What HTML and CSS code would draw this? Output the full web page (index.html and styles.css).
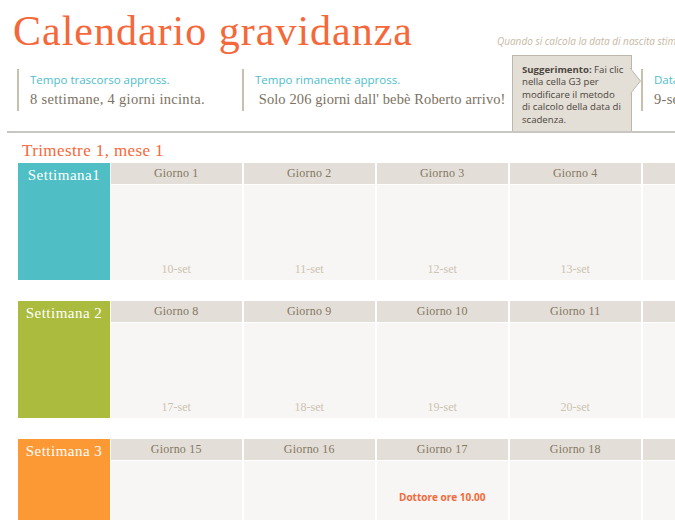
FILE: index.html
```html
<!DOCTYPE html>
<html lang="it">
<head>
<meta charset="utf-8">
<title>Calendario gravidanza</title>
<link rel="stylesheet" href="styles.css">
</head>
<body>
<div class="page">
  <header class="top">
    <div class="title-row">
      <h1 class="title">Calendario gravidanza</h1>
      <p class="note">Quando si calcola la data di nascita stimata, usare il primo giorno dell'ultimo ciclo</p>
    </div>
    <div class="stats">
      <div class="stat s1">
        <div class="lbl">Tempo trascorso appross.</div>
        <div class="val">8 settimane, 4 giorni incinta.</div>
      </div>
      <div class="stat s2">
        <div class="lbl">Tempo rimanente appross.</div>
        <div class="val val-tight">&nbsp;Solo 206 giorni dall' bebè Roberto arrivo!</div>
      </div>
      <div class="stat s3">
        <div class="lbl">Data di nascita stimata</div>
        <div class="val">9-set-2015</div>
      </div>
    </div>
    <div class="tip">
      <strong>Suggerimento:</strong> Fai clic nella cella G3 per modificare il metodo di calcolo della data di scadenza.
      <svg class="tip-arrow" width="12" height="28" viewBox="0 0 12 28"><polygon points="0,0 10.5,13 0,26" fill="#e3ded6" stroke="#bdb6ab" stroke-width="1"/><rect x="0" y="1" width="1.2" height="24.5" fill="#e3ded6"/></svg>
    </div>
  </header>
  <div class="rule"></div>
  <h2 class="tri">Trimestre 1, mese 1</h2>

  <div class="week">
    <div class="wlabel wk1">Settimana1</div>
    <div class="day"><div class="dh">Giorno 1</div><div class="db"><span class="date">10-set</span></div></div>
    <div class="day"><div class="dh">Giorno 2</div><div class="db"><span class="date">11-set</span></div></div>
    <div class="day"><div class="dh">Giorno 3</div><div class="db"><span class="date">12-set</span></div></div>
    <div class="day"><div class="dh">Giorno 4</div><div class="db"><span class="date">13-set</span></div></div>
    <div class="day"><div class="dh">Giorno 5</div><div class="db"><span class="date">14-set</span></div></div>
    <div class="day"><div class="dh">Giorno 6</div><div class="db"><span class="date">15-set</span></div></div>
    <div class="day"><div class="dh">Giorno 7</div><div class="db"><span class="date">16-set</span></div></div>
  </div>

  <div class="week">
    <div class="wlabel wk2">Settimana 2</div>
    <div class="day"><div class="dh">Giorno 8</div><div class="db"><span class="date">17-set</span></div></div>
    <div class="day"><div class="dh">Giorno 9</div><div class="db"><span class="date">18-set</span></div></div>
    <div class="day"><div class="dh">Giorno 10</div><div class="db"><span class="date">19-set</span></div></div>
    <div class="day"><div class="dh">Giorno 11</div><div class="db"><span class="date">20-set</span></div></div>
    <div class="day"><div class="dh">Giorno 12</div><div class="db"><span class="date">21-set</span></div></div>
    <div class="day"><div class="dh">Giorno 13</div><div class="db"><span class="date">22-set</span></div></div>
    <div class="day"><div class="dh">Giorno 14</div><div class="db"><span class="date">23-set</span></div></div>
  </div>

  <div class="week">
    <div class="wlabel wk3">Settimana 3</div>
    <div class="day"><div class="dh">Giorno 15</div><div class="db"><span class="date">24-set</span></div></div>
    <div class="day"><div class="dh">Giorno 16</div><div class="db"><span class="date">25-set</span></div></div>
    <div class="day"><div class="dh">Giorno 17</div><div class="db"><span class="event">Dottore ore 10.00</span><span class="date">26-set</span></div></div>
    <div class="day"><div class="dh">Giorno 18</div><div class="db"><span class="date">27-set</span></div></div>
    <div class="day"><div class="dh">Giorno 19</div><div class="db"><span class="date">28-set</span></div></div>
    <div class="day"><div class="dh">Giorno 20</div><div class="db"><span class="date">29-set</span></div></div>
    <div class="day"><div class="dh">Giorno 21</div><div class="db"><span class="date">30-set</span></div></div>
  </div>
</div>
</body>
</html>
```

FILE: styles.css
```css
html, body {
  margin: 0;
  padding: 0;
  background: #ffffff;
}
body {
  width: 675px;
  height: 520px;
  overflow: hidden;
}
.page {
  width: 675px;
  height: 520px;
  overflow: hidden;
}
.top {
  position: relative;
  height: 131px;
}
.title-row {
  display: flex;
  align-items: baseline;
  padding: 10px 0 0 13px;
  white-space: nowrap;
}
.title {
  flex: 0 0 484px;
  margin: 0;
  font-family: "Liberation Serif", serif;
  font-weight: normal;
  font-size: 42px;
  line-height: 42px;
  letter-spacing: 1px;
  color: #f5683a;
}
.note {
  margin: 0;
  font-family: "Open Sans", sans-serif;
  font-style: italic;
  font-size: 10px;
  color: #c8b9a4;
}
.stats {
  display: flex;
  margin-top: 17px;
  padding-left: 17px;
  white-space: nowrap;
}
.stat {
  box-sizing: border-box;
  height: 42px;
  border-left: 2px solid #c9bfae;
  padding-left: 11px;
  flex: 0 0 auto;
}
.s1 { width: 225px; }
.s2 { width: 399px; }
.s3 { width: 200px; }
.lbl {
  width: fit-content;
  font-family: "Open Sans", sans-serif;
  font-size: 11.5px;
  line-height: 16px;
  color: #4cbec9;
  margin-top: 3px;
}
.val {
  width: fit-content;
  font-family: "Liberation Serif", serif;
  font-size: 14.5px;
  line-height: 20px;
  letter-spacing: 0.3px;
  color: #7d7161;
  margin-top: 1px;
}
.val-tight {
  letter-spacing: 0.1px;
}
.tip {
  position: absolute;
  left: 512px;
  top: 55px;
  box-sizing: border-box;
  width: 120px;
  height: 78px;
  padding: 8px 6px 0 9px;
  background: #e3ded6;
  border: 1px solid #bdb6ab;
  font-family: "Open Sans", sans-serif;
  font-size: 9.6px;
  line-height: 12.4px;
  color: #4b4640;
}
.tip strong {
  font-weight: bold;
}
.tip-arrow {
  position: absolute;
  right: -11px;
  top: 12px;
}
.rule {
  height: 2px;
  margin-left: 7px;
  background: #c9c6c2;
  position: relative;
}
.tri {
  margin: 6px 0 0 22px;
  font-family: "Liberation Serif", serif;
  font-weight: normal;
  font-size: 17px;
  line-height: 24px;
  letter-spacing: 0.4px;
  color: #f5683a;
}
.week {
  display: flex;
  height: 117px;
  margin: 0 0 21px 18px;
  width: 1100px;
}
.wlabel {
  flex: 0 0 92px;
  margin-right: 1px;
  color: #ffffff;
  font-family: "Liberation Serif", serif;
  font-size: 15px;
  line-height: 20px;
  letter-spacing: 0.5px;
  text-align: center;
  padding-top: 2px;
  box-sizing: border-box;
  white-space: nowrap;
}
.wk1 { background: #4fbfc5; }
.wk2 { background: #abbb3e; }
.wk3 { background: #fd9934; }
.day {
  flex: 0 0 130.5px;
  margin-right: 2.5px;
  display: flex;
  flex-direction: column;
}
.dh {
  height: 21px;
  line-height: 21px;
  background: #e3dfd8;
  text-align: center;
  font-family: "Liberation Serif", serif;
  font-size: 12px;
  letter-spacing: 0.2px;
  color: #837763;
}
.db {
  flex: 1;
  margin-top: 1px;
  background: #f7f6f4;
  display: flex;
  flex-direction: column;
  align-items: center;
  padding-bottom: 3px;
}
.date {
  margin-top: auto;
  font-family: "Liberation Serif", serif;
  font-size: 12px;
  color: #cdc2b2;
}
.event {
  margin-top: 29px;
  font-family: "Open Sans", sans-serif;
  font-weight: bold;
  font-size: 10px;
  color: #f4693b;
}
```
